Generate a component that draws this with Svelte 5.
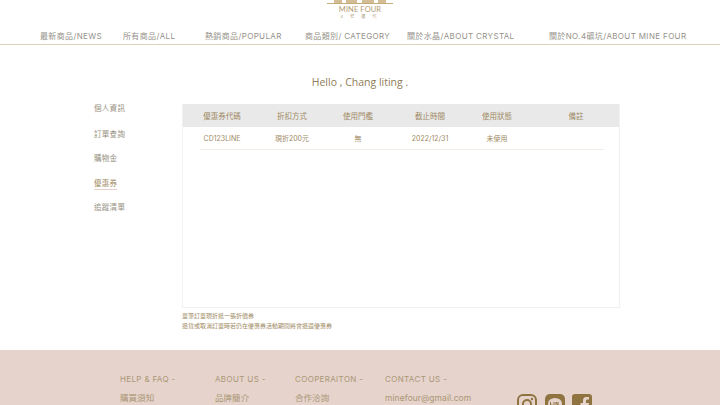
<script>
  const nav = [
    { label: '最新商品/NEWS', w: 83 },
    { label: '所有商品/ALL', w: 82 },
    { label: '熱銷商品/POPULAR', w: 100 },
    { label: '商品類別/ CATEGORY', w: 102 },
    { label: '關於水晶/ABOUT CRYSTAL', w: 142 },
    { label: '關於NO.4礦坑/ABOUT MINE FOUR', w: 140 }
  ];
  const side = [
    { label: '個人資訊', cls: 'first' },
    { label: '訂單查詢', cls: '' },
    { label: '購物金', cls: '' },
    { label: '優惠券', cls: 'active' },
    { label: '追蹤清單', cls: '' }
  ];
  const heads = ['優惠券代碼', '折扣方式', '使用門檻', '截止時間', '使用狀態', '備註'];
  const cells = ['CD123LINE', '現折200元', '無', '2022/12/31', '未使用', ''];
  const foot = [
    { h: 'HELP & FAQ -', l: '購買須知', w: 95 },
    { h: 'ABOUT US -', l: '品牌簡介', w: 80 },
    { h: 'COOPERAITON -', l: '合作洽詢', w: 90 },
    { h: 'CONTACT US -', l: 'minefour@gmail.com', w: 132 }
  ];
</script>

<div class="page">
  <header>
    <div class="logo">
      <svg width="66" height="4" viewBox="0 0 66 4" aria-hidden="true">
        <path d="M0 3.5H66" stroke="#c4ab7c" stroke-width="1" />
        <path d="M7 3V0H15V3ZM19 3V0H30V3ZM35 3V0H47V3ZM51 3V0H59V3Z" fill="#d2bd94" />
      </svg>
      <div class="brand">MINE FOUR</div>
      <div class="sub">4 號 礦 坑</div>
    </div>
    <nav>
      {#each nav as n}
        <span class="nav-item" style="width:{n.w}px">{n.label}</span>
      {/each}
    </nav>
  </header>

  <main>
    <h1>Hello , Chang liting .</h1>
    <div class="content">
      <ul class="side">
        {#each side as s}
          <li class={s.cls}><span>{s.label}</span></li>
        {/each}
      </ul>
      <div class="right">
        <div class="card">
          <div class="grid head">
            {#each heads as h}<span>{h}</span>{/each}
          </div>
          <div class="grid row">
            {#each cells as c}<span>{c}</span>{/each}
          </div>
        </div>
        <div class="notes">
          <p>單筆訂單現折抵一張折價券</p>
          <p>退貨或取消訂單時若仍在優惠券活動期間將會退還優惠券</p>
        </div>
      </div>
    </div>
  </main>

  <footer>
    <div class="cols">
      {#each foot as f}
        <div class="col" style="width:{f.w}px">
          <div class="fh">{f.h}</div>
          <div class="fl">{f.l}</div>
        </div>
      {/each}
    </div>
    <div class="icons">
      <svg width="20" height="20" viewBox="0 0 20 20" aria-hidden="true">
        <rect x="1" y="1" width="18" height="18" rx="5" fill="none" stroke="#8f7442" stroke-width="2" />
        <circle cx="10" cy="10" r="4" fill="none" stroke="#8f7442" stroke-width="2" />
        <circle cx="15" cy="5" r="1.2" fill="#8f7442" />
      </svg>
      <svg width="20" height="20" viewBox="0 0 20 20" aria-hidden="true">
        <rect width="20" height="20" rx="5" fill="#8f7442" />
        <ellipse cx="10" cy="9.5" rx="7" ry="5.5" fill="#e5d3cc" />
        <path d="M5.5 8V11H7.5M9 8V11M11 11V8L13 11V8" fill="none" stroke="#8f7442" stroke-width="1" />
      </svg>
      <svg width="20" height="20" viewBox="0 0 20 20" aria-hidden="true">
        <rect width="20" height="20" rx="3" fill="#8f7442" />
        <path d="M14 20V12H16.5L17 9H14V7C14 6 14.5 5.5 15.5 5.5H17V3H14.5C12 3 11 4.5 11 6.8V9H8.5V12H11V20Z" fill="#e5d3cc" />
      </svg>
    </div>
  </footer>
</div>

<style>
  :global(body) {
    margin: 0;
    background: #fff;
  }
  .page {
    width: 720px;
    height: 405px;
    overflow: hidden;
    display: flex;
    flex-direction: column;
    font-family: "Inter", "Noto Sans CJK TC", sans-serif;
  }
  header {
    height: 44px;
    border-bottom: 1px solid #ddd2bb;
    box-sizing: content-box;
  }
  .logo {
    height: 28px;
    display: flex;
    flex-direction: column;
    align-items: center;
    color: #b09a70;
  }
  .brand {
    font-family: "Lato", sans-serif;
    font-size: 7.5px;
    line-height: 9px;
    margin-top: 1px;
    letter-spacing: 0.1px;
  }
  .sub {
    font-size: 4px;
    line-height: 5px;
    margin-top: 0;
    letter-spacing: 3px;
    color: #a08a64;
    font-weight: 300;
  }
  nav {
    display: flex;
    padding-left: 40px;
    height: 15px;
    align-items: center;
  }
  .nav-item {
    font-size: 8px;
    letter-spacing: 0.36px;
    color: #96928a;
    white-space: nowrap;
  }
  main {
    flex: 1;
    min-height: 0;
  }
  h1 {
    margin: 30px 0 0;
    height: 15px;
    line-height: 15px;
    text-align: center;
    font-family: "Open Sans", sans-serif;
    font-weight: 400;
    font-size: 10.5px;
    color: #8f7c58;
  }
  .content {
    display: flex;
    margin-top: 14px;
    padding-left: 94px;
  }
  .side {
    list-style: none;
    margin: 0;
    padding: 0;
    width: 88px;
    font-size: 7.5px;
    color: #96917f;
  }
  .side li {
    height: 24.4px;
    line-height: 12px;
    letter-spacing: 0.3px;
  }
  .side li.first {
    height: 26px;
    margin-top: -1px;
  }
  .side li.active span {
    display: inline-block;
    color: #a08a64;
    border-bottom: 1px solid #e5cfc6;
    line-height: 10px;
  }
  .card {
    width: 438px;
    height: 204px;
    border: 1px solid #f3f0ee;
    border-top: 0;
    box-sizing: border-box;
  }
  .grid {
    display: grid;
    grid-template-columns: 44px 96px 36px 108px 26px 1fr;
    justify-items: center;
    align-items: center;
    white-space: nowrap;
    font-size: 7.5px;
    color: #a08a64;
  }
  .grid span:last-child {
    padding-left: 38px;
  }
  .head {
    height: 23px;
    background: #e9e9e9;
    padding: 0 15px 0 17px;
  }
  .row {
    height: 22px;
    margin: 0 15px 0 17px;
    border-bottom: 1px solid #f4ebe6;
    font-size: 7px;
  }
  .notes {
    margin-top: 3px;
    font-size: 6px;
    line-height: 10px;
    color: #a08a64;
  }
  .notes p {
    margin: 0;
  }
  footer {
    height: 55px;
    flex: none;
    background: #e5d3cc;
    display: flex;
    padding: 24px 0 0 120px;
    box-sizing: border-box;
    color: #ab9776;
    overflow: hidden;
  }
  .cols {
    display: flex;
  }
  .fh {
    font-size: 8px;
    line-height: 11px;
    letter-spacing: 0.35px;
    white-space: nowrap;
  }
  .fl {
    margin-top: 7px;
    font-size: 8.5px;
    line-height: 12px;
    letter-spacing: 0.05px;
    white-space: nowrap;
  }
  .icons {
    display: flex;
    gap: 7.5px;
    margin-top: 20px;
    flex: none;
  }
</style>
